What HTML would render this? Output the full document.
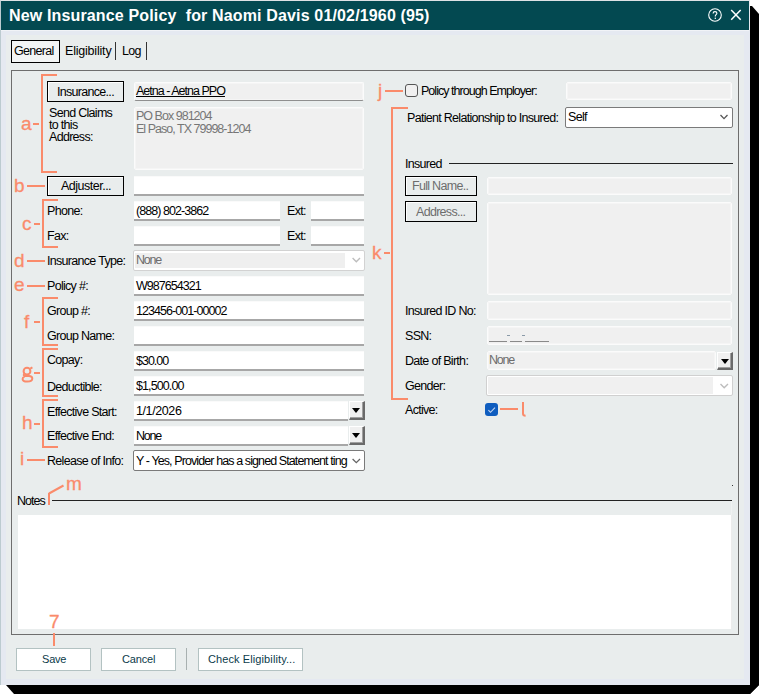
<!DOCTYPE html>
<html><head><meta charset="utf-8">
<style>
*{margin:0;padding:0;box-sizing:border-box}
html,body{width:765px;height:700px;overflow:hidden;background:#fff;position:relative;font-family:"Liberation Sans",sans-serif}
div,span{position:absolute}
.t{font-size:12.5px;line-height:13px;letter-spacing:-0.7px;color:#000;white-space:pre}
.sh{background:#000}
.o{background:#fa8b6b}
.og{color:#fa8b6b;font-size:19px;line-height:20px;white-space:pre;-webkit-text-stroke:0.3px #fa8b6b}
.btn{border:1px solid #000;box-shadow:inset 1px 1px 0 #fff;background:#e9eded}
.fld{background:#fff;border-bottom:2px solid #a7a7a7;border-top:1px solid #fafafa}
.dis{background:#f0f0f0;border:1px solid #fbfbfb;box-shadow:inset 0 0 0 1px #f5f5f5;border-radius:2px}
.fb{background:#fff;border:1px solid #a8a8a8;border-bottom:2px solid #a0a0a0}
.ddb{background:#f0f0f0;border-top:1px solid #fff;border-left:1px solid #fff;border-right:2px solid #6a6a6a;border-bottom:2px solid #6a6a6a;box-shadow:inset -1px -1px 0 #a0a0a0}
.tri{width:0;height:0;border-left:4px solid transparent;border-right:4px solid transparent;border-top:5px solid #000}
.pb{background:#fff;border:1px solid #b3c2c2}
</style></head><body>
<!-- shadow -->
<div class="sh" style="left:750px;top:6px;width:9px;height:688px;clip-path:polygon(0 0,2px 0,9px 8px,9px 679px,0 688px)"></div>
<div class="sh" style="left:6px;top:685px;width:753px;height:9px;clip-path:polygon(0 0,753px 0,753px 0,744px 9px,8px 9px)"></div>
<!-- dialog frame -->
<div style="left:0;top:0;width:750px;height:685px;background:#e5e9f1;border-left:1px solid #bccbd0;border-top:1px solid #dfe3e6"></div>
<div style="left:6px;top:35px;width:738px;height:644px;background:#e9eded"></div>
<div style="left:1px;top:1px;width:748px;height:29px;background:#034951"></div>
<div style="left:1px;top:30px;width:748px;height:1px;background:#f1f3f7"></div>
<span style="left:9px;top:6px;font-size:16px;line-height:20px;font-weight:bold;letter-spacing:0.15px;color:#fff;white-space:pre">New Insurance Policy  for Naomi Davis 01/02/1960 (95)</span>
<!-- help icon -->
<svg style="position:absolute;left:707px;top:7px" width="16" height="16" viewBox="0 0 16 16"><circle cx="8" cy="8" r="6.3" fill="none" stroke="#fff" stroke-width="1.1"/><path d="M6.1 6.4 C6.1 5.2 7 4.6 8 4.6 C9 4.6 9.9 5.2 9.9 6.3 C9.9 7.5 8.3 7.7 8.3 9 L8.3 9.5" fill="none" stroke="#fff" stroke-width="1.15"/><circle cx="8.3" cy="11.3" r="0.75" fill="#fff"/></svg>
<svg style="position:absolute;left:729px;top:8px" width="14" height="14" viewBox="0 0 14 14"><path d="M2.2 2 L11.7 11.8 M11.7 2 L2.2 11.8" stroke="#fff" stroke-width="1.5"/></svg>

<!-- tabs -->
<div style="left:11px;top:40px;width:49px;height:23px;border:1px solid #000;background:#f3f5f5"></div>
<span class="t" style="left:14px;top:45px">General</span>
<span class="t" style="left:65px;top:45px;letter-spacing:-0.2px">Eligibility</span>
<div style="left:115px;top:42px;width:1px;height:18px;background:#333"></div>
<span class="t" style="left:122px;top:45px">Log</span>
<div style="left:146px;top:42px;width:1px;height:18px;background:#333"></div>

<!-- group box -->
<div style="left:11px;top:70px;width:728px;height:565px;border:1px solid #6e6e6e"></div>

<!-- LEFT COLUMN -->
<div class="btn" style="left:47px;top:81px;width:77px;height:21px"></div>
<span class="t" style="left:57px;top:86px">Insurance...</span>
<div class="dis" style="left:134px;top:82px;width:230px;height:19px;border-bottom:1px solid #8f8f8f"></div>
<span class="t" style="left:136px;top:85px;text-decoration:underline;letter-spacing:-0.98px">Aetna - Aetna PPO</span>
<span class="t" style="left:49px;top:107px;line-height:12px">Send Claims
to this
Address:</span>
<div class="dis" style="left:134px;top:107px;width:230px;height:63px"></div>
<span class="t" style="left:136px;top:110px;color:#767676;line-height:13px;letter-spacing:-0.98px">PO Box 981204
El Paso, TX 79998-1204</span>

<div class="btn" style="left:47px;top:176px;width:77px;height:20px"></div>
<span class="t" style="left:61px;top:180px;letter-spacing:-0.5px">Adjuster...</span>
<div class="fld" style="left:134px;top:176px;width:230px;height:20px"></div>

<span class="t" style="left:47px;top:205px">Phone:</span>
<div class="fld" style="left:134px;top:201px;width:146px;height:20px"></div>
<span class="t" style="left:136px;top:205px;letter-spacing:-0.95px">(888) 802-3862</span>
<span class="t" style="left:287px;top:205px">Ext:</span>
<div class="fld" style="left:311px;top:201px;width:53px;height:20px"></div>

<span class="t" style="left:47px;top:230px">Fax:</span>
<div class="fld" style="left:134px;top:226px;width:146px;height:20px"></div>
<span class="t" style="left:287px;top:230px">Ext:</span>
<div class="fld" style="left:311px;top:226px;width:53px;height:20px"></div>

<span class="t" style="left:47px;top:255px">Insurance Type:</span>
<div style="left:133px;top:250px;width:232px;height:21px;border:1px solid #d2d2d2;background:#fff;border-radius:2px"></div>
<div style="left:135px;top:253px;width:210px;height:15px;background:#efefef"></div>
<span class="t" style="left:136px;top:254px;color:#6d6d6d;letter-spacing:-1.2px">None</span>
<svg style="position:absolute;left:352px;top:257px" width="9" height="7" viewBox="0 0 9 7"><path d="M0.6 1 L4.3 4.7 L8 1" fill="none" stroke="#bdbdbd" stroke-width="1.4"/></svg>

<span class="t" style="left:47px;top:280px">Policy #:</span>
<div class="fld" style="left:134px;top:276px;width:230px;height:20px"></div>
<span class="t" style="left:136px;top:280px;letter-spacing:-0.95px">W987654321</span>

<span class="t" style="left:47px;top:305px">Group #:</span>
<div class="fld" style="left:134px;top:301px;width:230px;height:20px"></div>
<span class="t" style="left:136px;top:305px;letter-spacing:-0.95px">123456-001-00002</span>

<span class="t" style="left:47px;top:330px">Group Name:</span>
<div class="fld" style="left:134px;top:326px;width:230px;height:20px"></div>

<span class="t" style="left:47px;top:354px">Copay:</span>
<div class="fld" style="left:134px;top:351px;width:230px;height:20px"></div>
<span class="t" style="left:136px;top:355px;letter-spacing:-1px">$30.00</span>

<span class="t" style="left:47px;top:381px">Deductible:</span>
<div class="fld" style="left:134px;top:376px;width:230px;height:20px"></div>
<span class="t" style="left:136px;top:380px;letter-spacing:-0.9px">$1,500.00</span>

<span class="t" style="left:47px;top:406px">Effective Start:</span>
<div class="fld" style="left:134px;top:401px;width:214px;height:20px"></div>
<span class="t" style="left:136px;top:405px;letter-spacing:-0.4px">1/1/2026</span>
<div class="ddb" style="left:349px;top:401px;width:16px;height:19px"></div>
<div class="tri" style="left:352px;top:408px"></div>

<span class="t" style="left:47px;top:430px">Effective End:</span>
<div class="fld" style="left:134px;top:426px;width:214px;height:20px"></div>
<span class="t" style="left:136px;top:430px;letter-spacing:-1.2px">None</span>
<div class="ddb" style="left:349px;top:426px;width:16px;height:19px"></div>
<div class="tri" style="left:352px;top:433px"></div>

<span class="t" style="left:47px;top:455px">Release of Info:</span>
<div style="left:133px;top:450px;width:232px;height:21px;border:1px solid #7a7a7a;background:#fff;border-radius:2px"></div>
<span class="t" style="left:136px;top:455px;letter-spacing:-0.9px">Y - Yes, Provider has a signed Statement ting</span>
<svg style="position:absolute;left:352px;top:458px" width="9" height="7" viewBox="0 0 9 7"><path d="M0.6 1 L4.3 4.7 L8 1" fill="none" stroke="#666" stroke-width="1.3"/></svg>

<!-- RIGHT COLUMN -->
<div style="left:405px;top:84px;width:13px;height:13px;border:1px solid #555;border-radius:3px;background:#f0f0f0"></div>
<span class="t" style="left:421px;top:85px;letter-spacing:-0.97px">Policy through Employer:</span>
<div class="dis" style="left:566px;top:82px;width:166px;height:18px"></div>

<span class="t" style="left:407px;top:112px">Patient Relationship to Insured:</span>
<div style="left:565px;top:107px;width:168px;height:21px;border:1px solid #7a7a7a;background:#fff;border-radius:2px"></div>
<span class="t" style="left:568px;top:111px">Self</span>
<svg style="position:absolute;left:720px;top:114px" width="9" height="7" viewBox="0 0 9 7"><path d="M0.5 1 L4 4.6 L7.5 1" fill="none" stroke="#555" stroke-width="1.3"/></svg>

<span class="t" style="left:405px;top:158px">Insured</span>
<div style="left:449px;top:163px;width:284px;height:1px;background:#222"></div>
<div class="btn" style="left:405px;top:176px;width:72px;height:20px"></div>
<span class="t" style="left:412px;top:180px;color:#6d6d6d">Full Name..</span>
<div class="dis" style="left:487px;top:177px;width:245px;height:18px"></div>
<div class="btn" style="left:405px;top:201px;width:72px;height:21px"></div>
<span class="t" style="left:416px;top:206px;color:#6d6d6d">Address...</span>
<div class="dis" style="left:487px;top:202px;width:245px;height:93px"></div>

<span class="t" style="left:405px;top:305px">Insured ID No:</span>
<div class="dis" style="left:487px;top:301px;width:245px;height:19px"></div>
<span class="t" style="left:405px;top:330px">SSN:</span>
<div class="dis" style="left:487px;top:326px;width:245px;height:19px"></div>
<div style="left:489px;top:341px;width:18px;height:1px;background:#8a8a8a"></div>
<div style="left:510px;top:341px;width:12px;height:1px;background:#8a8a8a"></div>
<div style="left:525px;top:341px;width:24px;height:1px;background:#8a8a8a"></div>
<div style="left:507px;top:335px;width:3px;height:1px;background:#8a9aa8"></div>
<div style="left:522px;top:335px;width:3px;height:1px;background:#8a9aa8"></div>
<span class="t" style="left:405px;top:355px">Date of Birth:</span>
<div class="dis" style="left:487px;top:351px;width:229px;height:19px"></div>
<span class="t" style="left:489px;top:354px;color:#6d6d6d;letter-spacing:-1.2px">None</span>
<div class="ddb" style="left:717px;top:352px;width:16px;height:18px"></div>
<div class="tri" style="left:721px;top:359px"></div>
<span class="t" style="left:405px;top:380px">Gender:</span>
<div style="left:486px;top:375px;width:247px;height:21px;border:1px solid #d0d0d0;background:#fff;border-radius:2px"></div>
<div style="left:488px;top:377px;width:225px;height:17px;background:#f0f0f0"></div>
<svg style="position:absolute;left:720px;top:383px" width="9" height="7" viewBox="0 0 9 7"><path d="M0.5 1 L4.2 4.8 L8 1" fill="none" stroke="#bdbdbd" stroke-width="1.4"/></svg>
<span class="t" style="left:405px;top:404px">Active:</span>
<div style="left:485px;top:403px;width:13px;height:13px;border-radius:3px;background:#0f5dbf"></div>
<svg style="position:absolute;left:485px;top:403px" width="13" height="13" viewBox="0 0 13 13"><path d="M3.4 7.1 L5.5 9.3 L10 4.6" fill="none" stroke="#c4d6f2" stroke-width="1.1"/></svg>

<!-- Notes -->
<span class="t" style="left:17px;top:495px;letter-spacing:-0.95px">Notes</span>
<div style="left:52px;top:500px;width:680px;height:1px;background:#222"></div>
<div style="left:18px;top:515px;width:714px;height:114px;background:#fff;border-right:1px solid #ececec"></div>
<div style="left:731px;top:501px;width:1px;height:14px;background:#f0f2f2"></div>
<div style="left:732px;top:485px;width:1px;height:1px;background:#333"></div>

<!-- bottom buttons -->
<div class="pb" style="left:16px;top:648px;width:75px;height:23px"></div>
<span class="t" style="left:42px;top:653px;color:#0b3b4a;font-size:11px;letter-spacing:-0.2px">Save</span>
<div class="pb" style="left:101px;top:648px;width:75px;height:23px"></div>
<span class="t" style="left:122px;top:653px;color:#0b3b4a;font-size:11px;letter-spacing:-0.15px">Cancel</span>
<div style="left:186px;top:648px;width:1px;height:22px;background:#a8b0b0"></div>
<div class="pb" style="left:198px;top:648px;width:105px;height:23px"></div>
<span class="t" style="left:208px;top:653px;color:#0b3b4a;font-size:11px;letter-spacing:0.1px">Check Eligibility...</span>

<!-- ANNOTATIONS -->
<!-- a -->
<div class="o" style="left:41px;top:74px;width:2px;height:99px"></div>
<div class="o" style="left:41px;top:74px;width:16px;height:2px"></div>
<div class="o" style="left:41px;top:171px;width:16px;height:2px"></div>
<span id="ga" class="og" style="left:21px;top:114px">a</span>
<div class="o" style="left:33px;top:123px;width:6px;height:2px"></div>
<!-- b -->
<span id="gb" class="og" style="left:14px;top:176px">b</span>
<div class="o" style="left:27px;top:185px;width:18px;height:2px"></div>
<!-- c -->
<div class="o" style="left:42px;top:199px;width:2px;height:49px"></div>
<div class="o" style="left:42px;top:199px;width:16px;height:2px"></div>
<div class="o" style="left:42px;top:246px;width:16px;height:2px"></div>
<span id="gc" class="og" style="left:22px;top:214px">c</span>
<div class="o" style="left:34px;top:223px;width:6px;height:2px"></div>
<!-- d -->
<span id="gd" class="og" style="left:14px;top:251px">d</span>
<div class="o" style="left:27px;top:260px;width:18px;height:2px"></div>
<!-- e -->
<span id="ge" class="og" style="left:14px;top:275px">e</span>
<div class="o" style="left:27px;top:285px;width:18px;height:2px"></div>
<!-- f -->
<div class="o" style="left:42px;top:297px;width:2px;height:49px"></div>
<div class="o" style="left:42px;top:297px;width:16px;height:2px"></div>
<div class="o" style="left:42px;top:344px;width:16px;height:2px"></div>
<span id="gf" class="og" style="left:24px;top:312px">f</span>
<div class="o" style="left:34px;top:321px;width:6px;height:2px"></div>
<!-- g -->
<div class="o" style="left:42px;top:348px;width:2px;height:49px"></div>
<div class="o" style="left:42px;top:348px;width:16px;height:2px"></div>
<div class="o" style="left:42px;top:395px;width:16px;height:2px"></div>
<svg style="position:absolute;left:21px;top:366px" width="13" height="18" viewBox="0 0 13 18"><g fill="none" stroke="#fa8b6b" stroke-width="2"><circle cx="6" cy="5.2" r="3.4"/><path d="M9.2 2.6 L11.4 1.4"/><path d="M3.6 7.6 C2.2 8.6 2.6 10 4.2 10 L8 10 C10.6 10 11.3 11.4 11.3 12.6 C11.3 14.4 9.4 15.6 6.4 15.6 C3.4 15.6 1.6 14.6 1.6 12.9 C1.6 11.8 2.4 11 3.6 10.6"/></g></svg>
<div class="o" style="left:34px;top:372px;width:6px;height:2px"></div>
<!-- h -->
<div class="o" style="left:42px;top:399px;width:2px;height:49px"></div>
<div class="o" style="left:42px;top:399px;width:16px;height:2px"></div>
<div class="o" style="left:42px;top:446px;width:16px;height:2px"></div>
<span id="gh" class="og" style="left:22px;top:413px">h</span>
<div class="o" style="left:34px;top:423px;width:6px;height:2px"></div>
<!-- i -->
<span id="gi" class="og" style="left:20px;top:449px">i</span>
<div class="o" style="left:27px;top:459px;width:18px;height:2px"></div>
<!-- j -->
<span id="gj" class="og" style="left:378px;top:81px">j</span>
<div class="o" style="left:385px;top:90px;width:18px;height:2px"></div>
<!-- k -->
<div class="o" style="left:391px;top:107px;width:2px;height:293px"></div>
<div class="o" style="left:391px;top:107px;width:17px;height:2px"></div>
<div class="o" style="left:391px;top:398px;width:17px;height:2px"></div>
<span id="gk" class="og" style="left:372px;top:243px">k</span>
<div class="o" style="left:384px;top:252px;width:6px;height:2px"></div>
<!-- l -->
<div class="o" style="left:500px;top:408px;width:18px;height:2px"></div>
<svg style="position:absolute;left:520px;top:401px" width="8" height="17" viewBox="0 0 8 17"><path d="M3 1 L3 12.5 C3 14 3.8 14.8 5.6 14.8" fill="none" stroke="#fa8b6b" stroke-width="2"/></svg>
<!-- m -->
<div class="o" style="left:48px;top:493px;width:2px;height:12px"></div>
<svg style="position:absolute;left:46px;top:483px" width="20" height="12" viewBox="0 0 20 12"><path d="M3 10.5 L17.5 2.5" stroke="#fa8b6b" stroke-width="2"/></svg>
<span id="gm" class="og" style="left:66px;top:474px">m</span>
<!-- 7 -->
<span id="g7" class="og" style="left:49px;top:612px">7</span>
<div class="o" style="left:53px;top:633px;width:2px;height:13px"></div>
</body></html>
